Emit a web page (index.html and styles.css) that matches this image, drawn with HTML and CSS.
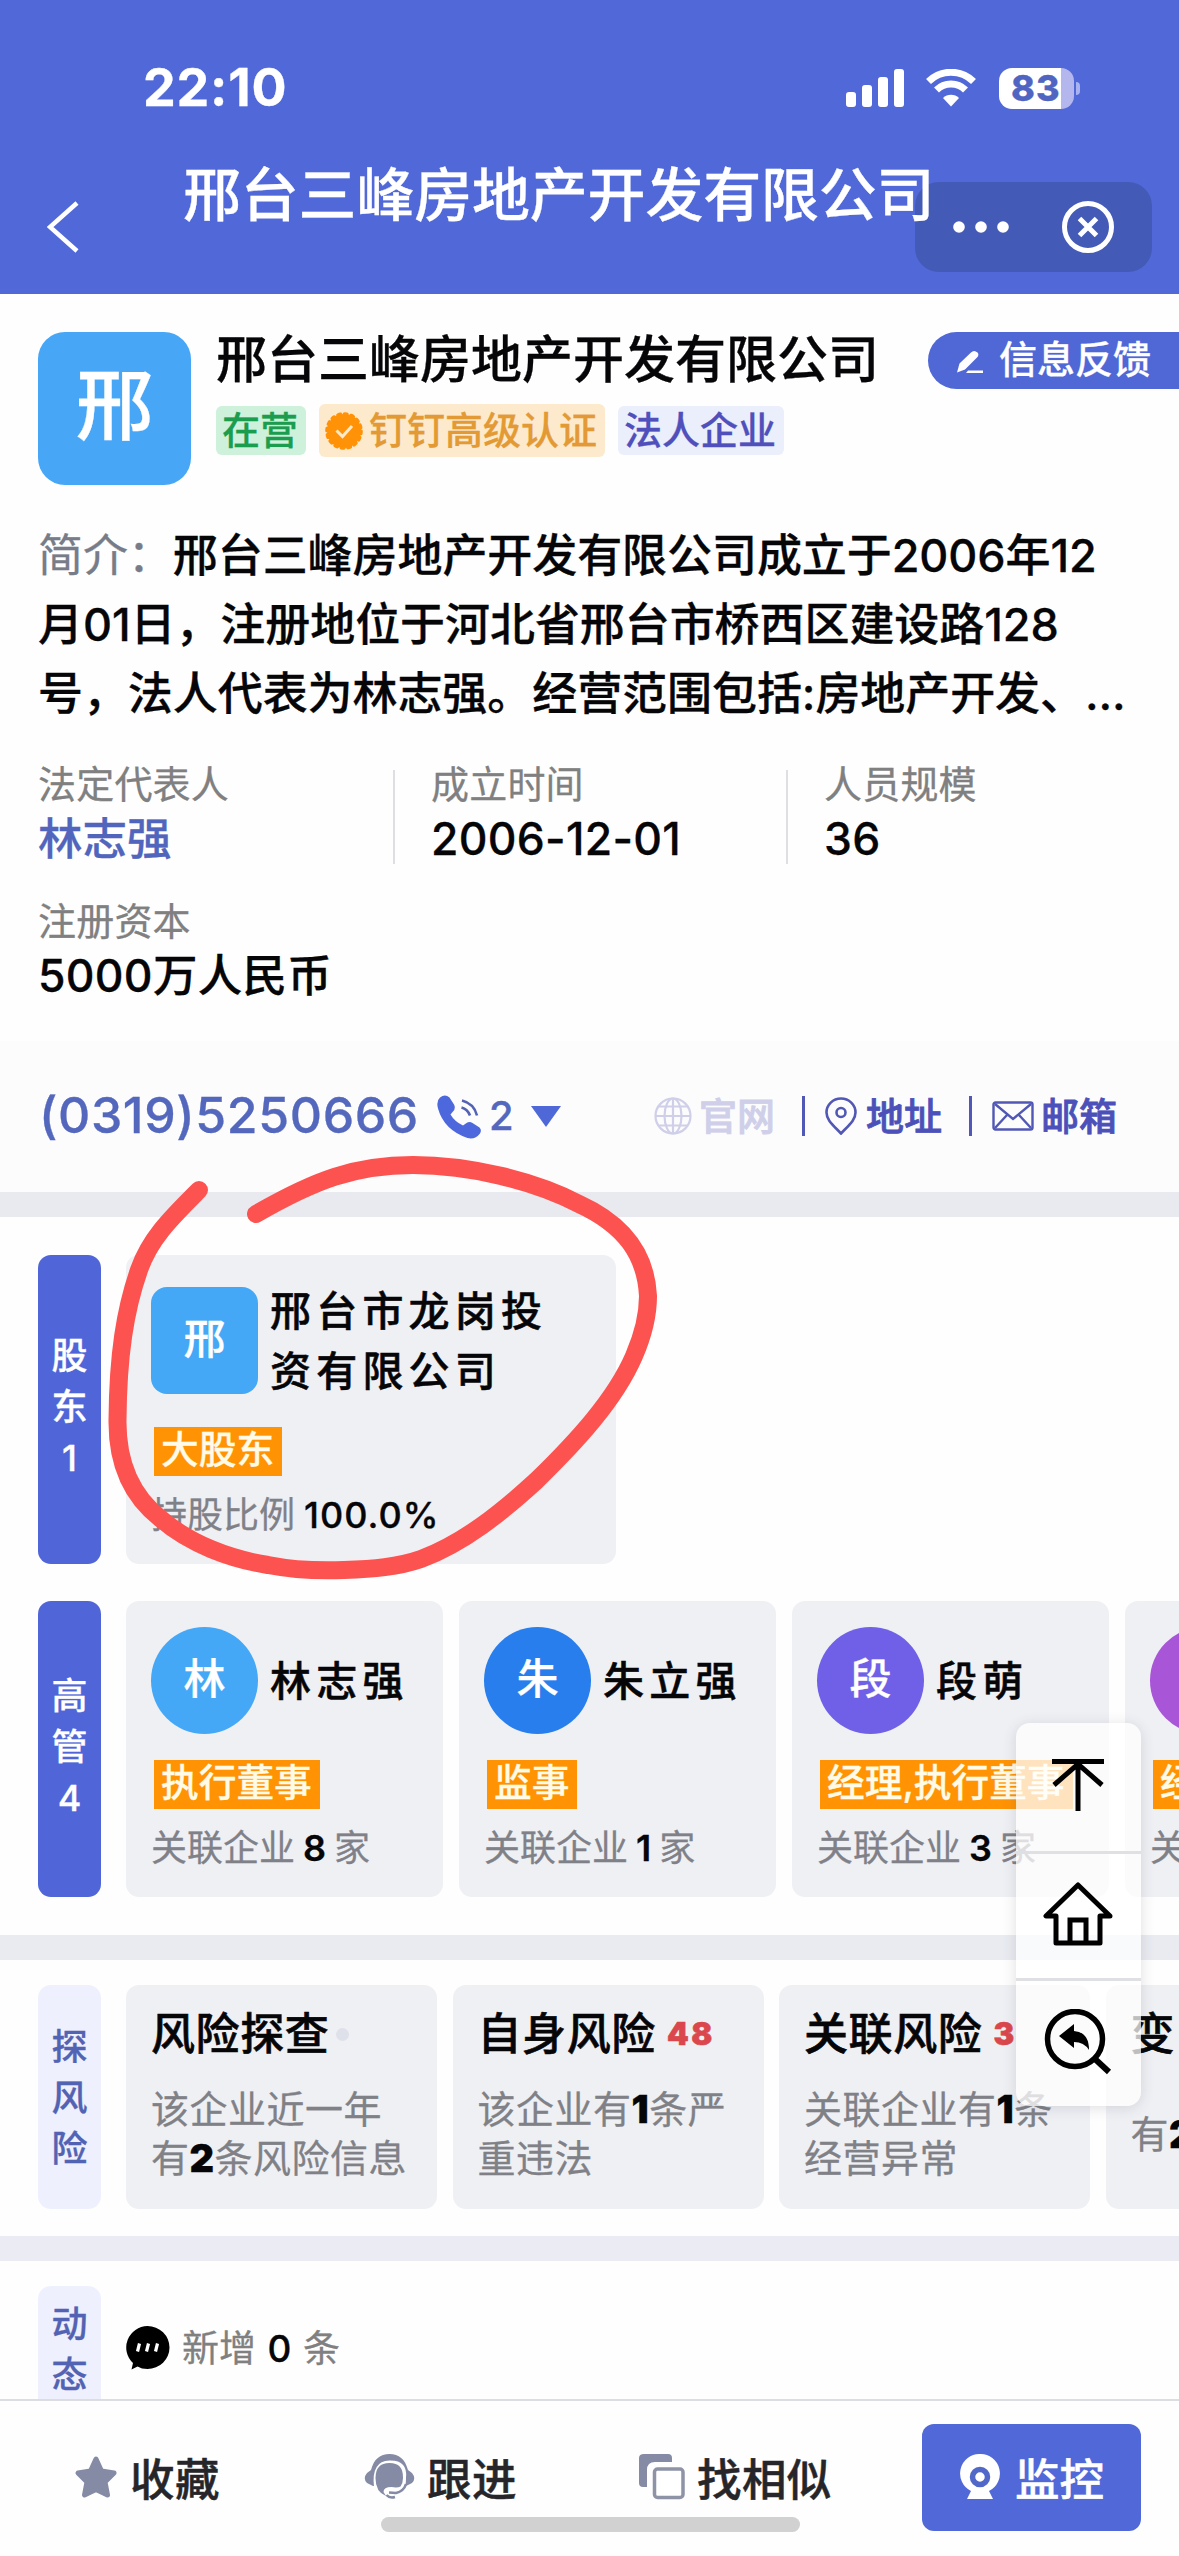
FILE: index.html
```html
<!DOCTYPE html>
<html lang="zh-CN">
<head>
<meta charset="utf-8">
<title>邢台三峰房地产开发有限公司</title>
<link rel="stylesheet" href="styles.css">
</head>
<body>
<div class="screen">
  <header class="header">
    <div class="status">
      <span class="time">22:10</span>
      <div class="status-icons">
        <svg class="signal" viewBox="0 0 58 38" fill="#fff"><rect x="0" y="23" width="10" height="15" rx="3"/><rect x="16" y="16" width="10" height="22" rx="3"/><rect x="32" y="8" width="10" height="30" rx="3"/><rect x="48" y="0" width="10" height="38" rx="3"/></svg>
        <svg class="wifi" viewBox="0 0 50 38" fill="none" stroke="#fff"><path d="M2.500 12.500a32 32 0 0 1 45 0" stroke-width="7"/><path d="M10.500 21a20.500 20.500 0 0 1 29 0" stroke-width="7"/><path d="M25 37.500l-8-8.500a11.500 11.500 0 0 1 16 0z" fill="#fff" stroke="none"/></svg>
        <div class="battery"><span class="battery-text">83</span></div>
      </div>
    </div>
    <div class="navbar">
      <svg class="back" viewBox="0 0 32 52" fill="none" stroke="#fff" stroke-width="4.500"><path d="M30 2L3 26l27 24"/></svg>
      <h1 class="page-title">邢台三峰房地产开发有限公司</h1>
      <div class="capsule">
        <svg class="dots" viewBox="0 0 56 12" fill="#fff"><circle cx="6" cy="6" r="5.800"/><circle cx="28" cy="6" r="5.800"/><circle cx="50" cy="6" r="5.800"/></svg>
        <svg class="close" viewBox="0 0 52 52" fill="none" stroke="#fff" stroke-width="5"><circle cx="26" cy="26" r="23.500"/><path d="M17.500 17.500l17 17M34.500 17.500l-17 17"/></svg>
      </div>
    </div>
  </header>

  <section class="company">
    <div class="company-head">
      <div class="logo">邢</div>
      <div class="company-main">
        <h2 class="company-name">邢台三峰房地产开发有限公司</h2>
        <div class="tags">
          <span class="tag tag-green">在营</span>
          <span class="tag tag-orange"><svg class="seal" viewBox="0 0 38 38"><circle cx="19" cy="19" r="17" fill="#ff9206"/><circle cx="19" cy="19" r="17" fill="none" stroke="#ff9206" stroke-width="3.600" stroke-linecap="round" stroke-dasharray="2.500 4.176"/><path d="M11.500 18.500l6 6 9.500-10.500" fill="none" stroke="#ffe9c8" stroke-width="3"/></svg>钉钉高级认证</span>
          <span class="tag tag-blue">法人企业</span>
        </div>
      </div>
      <div class="feedback">
        <svg class="pencil" viewBox="0 0 27 24" fill="#fff"><path d="M0 22.500l2.500-9L14 2.500q3-3 6.500 0 2 2.500-.5 5L8 19.500z"/><path d="M11 20.500h15v2.500H9z"/></svg>
        <span>信息反馈</span>
      </div>
    </div>
    <p class="intro"><span class="intro-label">简介：</span>邢台三峰房地产开发有限公司成立于2006年12<br>月01日，注册地位于河北省邢台市桥西区建设路128<br>号，法人代表为林志强。经营范围包括:房地产开发、...</p>
    <dl class="facts">
      <div class="fact"><dt>法定代表人</dt><dd class="link">林志强</dd></div>
      <div class="fact"><dt>成立时间</dt><dd>2006-12-01</dd></div>
      <div class="fact"><dt>人员规模</dt><dd>36</dd></div>
      <div class="fact"><dt>注册资本</dt><dd>5000万人民币</dd></div>
    </dl>
  </section>

  <section class="contact">
    <span class="phone">(0319)5250666</span>
    <svg class="call" viewBox="0 0 44 44"><path d="M3 2.500Q8-1.500 12.500 2.500L17 9.500q2 4-1 7l-2.500 3q4 7 12.500 11l3.500-2.500q3-2 6 0l7 4.500q2.500 2.500 .5 6-5 6.500-12.500 4.500Q7 35 1 13.500-1 6 3 2.500z" fill="#4d68dc"/><path d="M24.500 12.500q6 1.500 8.500 8M25 5.500q12 3 15 15" fill="none" stroke="#5262b4" stroke-width="2.600"/></svg>
    <span class="phone-count">2</span>
    <svg class="caret" viewBox="0 0 30 21"><path d="M0 0h30L15 21z" fill="#4f68d8"/></svg>
    <div class="links">
      <span class="contact-link muted"><svg class="globe" viewBox="0 0 38 38" fill="none" stroke="currentColor" stroke-width="2.200"><circle cx="19" cy="19" r="17.500"/><ellipse cx="19" cy="19" rx="8.500" ry="17.500"/><path d="M19 1.500v35M1.500 19h35M5 9.500h28M5 28.500h28"/></svg>官网</span>
      <i class="bar"></i>
      <span class="contact-link"><svg class="pin" viewBox="0 0 32 38" fill="none" stroke="#5157b4" stroke-width="2.600"><path d="M16 36.500C8 28 1.500 23 1.500 15.500a14.500 14 0 0 1 29 0C30.500 23 24 28 16 36.500z"/><circle cx="16" cy="15.500" r="4.500"/></svg>地址</span>
      <i class="bar"></i>
      <span class="contact-link"><svg class="mail" viewBox="0 0 42 30" fill="none" stroke="#5157b4" stroke-width="2.400"><rect x="1.500" y="1.500" width="39" height="27" rx="2"/><path d="M3 3l18 15L39 3M3 27l12-13M39 27L27 14"/></svg>邮箱</span>
    </div>
  </section>

  <section class="people">
    <div class="row holders">
      <div class="tab">股<br>东<br>1</div>
      <article class="card holder">
        <div class="who"><span class="avatar square">邢</span><span class="name">邢台市龙岗投<br>资有限公司</span></div>
        <span class="badge">大股东</span>
        <p class="meta">持股比例<b>100.0%</b></p>
      </article>
    </div>
    <div class="row execs">
      <div class="tab">高<br>管<br>4</div>
      <article class="card exec">
        <div class="who"><span class="avatar sky">林</span><span class="name">林志强</span></div>
        <span class="badge">执行董事</span>
        <p class="meta">关联企业<b>8</b>家</p>
      </article>
      <article class="card exec">
        <div class="who"><span class="avatar blue">朱</span><span class="name">朱立强</span></div>
        <span class="badge">监事</span>
        <p class="meta">关联企业<b>1</b>家</p>
      </article>
      <article class="card exec">
        <div class="who"><span class="avatar violet">段</span><span class="name">段萌</span></div>
        <span class="badge">经理,执行董事</span>
        <p class="meta">关联企业<b>3</b>家</p>
      </article>
      <article class="card exec">
        <div class="who"><span class="avatar purple"></span></div>
        <span class="badge">经</span>
        <p class="meta">关</p>
      </article>
    </div>
  </section>

  <section class="risks">
    <div class="row risk-row">
      <div class="tab pale">探<br>风<br>险</div>
      <article class="card risk"><h3>风险探查<i class="dot"></i></h3><p>该企业近一年<br>有<b>2</b>条风险信息</p></article>
      <article class="card risk"><h3>自身风险<em>48</em></h3><p>该企业有<b>1</b>条严<br>重违法</p></article>
      <article class="card risk"><h3>关联风险<em>3</em></h3><p>关联企业有<b>1</b>条<br>经营异常</p></article>
      <article class="card risk"><h3>变</h3><p class="single">有<b>2</b></p></article>
    </div>
  </section>

  <section class="news">
    <div class="tab pale">动<br>态</div>
    <svg class="chat" viewBox="0 0 45 44"><path d="M22.500 0a22 21.500 0 0 1 0 43q-6 0-10-2.500L6.500 43.500 8 37A22 21.500 0 0 1 22.500 0z"/><path d="M14.500 17.500l-2 8M23.500 17.500l-2 8M32.500 17.500l-2 8" stroke="#fff" stroke-width="3.200"/></svg>
    <span class="news-text">新增<b>0</b>条</span>
  </section>

  <nav class="toolbar">
    <a class="tool star-tool"><svg class="star" viewBox="0 0 46 44"><path d="M23 4l5.500 12L41 18l-9 9 2.500 13L23 34.500 11.500 40 14 27l-9-9 12.500-2z" fill="#858ba5" stroke="#858ba5" stroke-width="5" stroke-linejoin="round"/></svg>收藏</a>
    <a class="tool follow-tool"><svg class="headset" viewBox="0 0 51 45"><path d="M7 16C10 5 16 0 25.500 0S41 5 44 16l4 3q4.500 5.500 0 10l-6 3H9l-6-3q-4.500-4.500 0-10z" fill="#858ba5"/><path d="M10 33Q7 7 25.500 6.500T42 24q0 8-2 11l-15 9q-9 0-15-11z" fill="#fff"/><path d="M11.500 24Q11.500 9 25.500 9t13.500 15q0 5-2.500 8.500-3 1.500-9 .5-8 0-8 5l2.500 4Q11.500 38 11.500 24z" fill="#858ba5"/><path d="M42 30q-2 7-10 9l-7-.5M22.500 41q3 3.500 8.500 2" fill="none" stroke="#858ba5" stroke-width="2.600"/></svg>跟进</a>
    <a class="tool similar-tool"><svg class="copy" viewBox="0 0 47 46"><path d="M5 0h24q4 0 4 4v4H16q-8 0-8 8v17H4q-4 0-4-4V4q0-4 5-4z" fill="#858ba5"/><rect x="15.500" y="15" width="28.500" height="28.500" rx="3" fill="#fff" stroke="#8f93a6" stroke-width="3.500"/></svg>找相似</a>
    <a class="monitor"><svg class="camera" viewBox="0 0 40 46"><path d="M20 0a19.500 19.500 0 0 1 9 37l4 8H7l4-8A19.500 19.500 0 0 1 20 0z" fill="#fff"/><circle cx="20" cy="23" r="7.500" fill="none" stroke="#5168c8" stroke-width="5.500"/></svg>监控</a>
    <div class="home-indicator"></div>
  </nav>

  <aside class="float-menu">
    <div class="float-item"><svg class="to-top" viewBox="0 0 54 54" fill="none" stroke="#000" stroke-width="5"><path d="M1 3.500h52M27 3v50M3 27L27 6l24 21"/></svg></div>
    <div class="float-item"><svg class="home" viewBox="0 0 70 64" fill="none" stroke="#000" stroke-width="5" stroke-linejoin="round"><path d="M35 3L3 34h10v27h44V34h10z"/><path d="M27 60V38h16v22" stroke-linejoin="miter"/></svg></div>
    <div class="float-item"><svg class="search" viewBox="0 0 68 66"><circle cx="31" cy="30" r="27.500" fill="none" stroke="#000" stroke-width="5.500"/><path d="M51 50l14 13" stroke="#000" stroke-width="6"/><path d="M15 27l15-12v7q15 1 15 19-5-8-15-8v6z"/></svg></div>
  </aside>

  <svg class="annotation" viewBox="0 0 560 430" fill="none" stroke="#fc5350" stroke-width="18" stroke-linecap="round" stroke-linejoin="round"><path d="M99 40C72 67 50 88 39 120C25 160 18 205 17.500 270C17 310 30 345 61 369C90 394 130 409 168 415C194 420 220 421 244 420C273 419 298 417 321 409C364 393 402 362 436 331C476 292 515 250 534 206C544 183 548 165 548 146C546 105 525 75 479 54C435 31 370 15 313 15C255 15 215 30 156 64"/></svg>
</div>
</body>
</html>
```
FILE: styles.css
```css
* { box-sizing: border-box; margin: 0; padding: 0; }
body { width: 1179px; height: 2556px; overflow: hidden; background: #fefefe; font-family: Inter, "Noto Sans CJK SC", sans-serif; color: #060608; font-weight: 500; -webkit-text-stroke: .3px currentColor; }
svg { display: block; flex: none; }
i, em { font-style: normal; }
.screen { position: relative; width: 1179px; height: 2556px; display: flex; flex-direction: column; overflow: hidden; white-space: nowrap; }
.screen > * { flex: none; }

/* Header */
.header { height: 294px; background: #5169d8; color: #fff; padding-top: 60px; }
.status { height: 56px; display: flex; align-items: center; padding: 0 98px 0 143px; justify-content: space-between; }
.time { font-size: 52px; font-weight: 700; line-height: 56px; letter-spacing: .8px; }
.status-icons { display: flex; align-items: center; }
.signal { width: 58px; height: 38px; margin-right: 22px; }
.wifi { width: 50px; height: 38px; margin-right: 23px; }
.battery { position: relative; width: 75px; height: 41px; margin-right: 7px; border-radius: 13px; background: linear-gradient(90deg, #fff 62px, #b4b6ee 62px); display: flex; align-items: center; padding-left: 12px; }
.battery::after { content: ""; position: absolute; left: 77px; top: 14px; width: 4px; height: 13px; border-radius: 0 4px 4px 0; background: #a9b3ef; }
.battery-text { color: #5065c2; font-size: 36px; font-weight: 800; letter-spacing: 1px; }
.navbar { display: flex; height: 178px; padding: 42px 27px 0 47px; }
.back { width: 32px; height: 52px; margin-top: 43px; }
.page-title { position: relative; z-index: 1; width: 732px; margin: 2px 0 0 104px; font-size: 58px; font-weight: 500; line-height: 70px; letter-spacing: -0.2px; }
.capsule { width: 237px; height: 90px; margin-top: 24px; border-radius: 24px; background: #445ab7; display: flex; align-items: center; justify-content: space-between; padding: 0 38px 0 38px; }
.dots { width: 56px; height: 12px; }
.close { width: 52px; height: 52px; }

/* Company summary */
.company { height: 747px; padding-top: 38px; }
.company-head { display: flex; padding-left: 38px; }
.logo { width: 153px; height: 153px; border-radius: 27px; background: #47a7f6; color: #fff; font-size: 78px; line-height: 148px; text-align: center; }
.company-main { width: 737px; padding-left: 25px; }
.company-name { font-size: 51px; font-weight: 500; line-height: 56px; }
.tags { display: flex; gap: 13px; margin-top: 16px; align-items: center; }
.tag { height: 49px; line-height: 47px; font-size: 38px; border-radius: 6px; padding: 0 6px; display: flex; align-items: center; }
.tag-green { background: #cdf1db; color: #1a9d4e; width: 90px; }
.tag-orange { background: #fdeacc; color: #e39a34; height: 53px; width: 286px; }
.tag-blue { background: #ebeefb; color: #4f50bb; width: 166px; }
.seal { width: 38px; height: 38px; margin-right: 6px; }
.feedback { flex: 1; height: 57px; border-radius: 29px 0 0 29px; background: #5067d6; color: #fff; font-size: 38px; display: flex; align-items: center; padding: 0 0 4px 29px; }
.feedback span { margin-top: -4px; }
.pencil { width: 27px; height: 24px; margin: 6px 15px 0 0; }
.intro { margin: 36px 0 0 38px; font-size: 45px; line-height: 69px; letter-spacing: -0.07px; }
.intro-label { color: #777c88; font-weight: 400; }
.facts { display: grid; grid-template-columns: repeat(3, 393px); row-gap: 31px; margin-top: 30px; }
.fact { padding-left: 38px; height: 106px; position: relative; }
.fact:nth-child(2), .fact:nth-child(3) { background: linear-gradient(#dfdfe3, #dfdfe3) -1px 12px / 3px 94px no-repeat; }
.fact dt { font-size: 38px; font-weight: 400; line-height: 52px; color: #808080; letter-spacing: .2px; }
.fact dd { font-size: 44.500px; line-height: 58px; letter-spacing: .3px; }
.fact .link { color: #5265bd; letter-spacing: 0; }

/* Contact strip */
.contact { height: 151px; background: #fcfcfd; display: flex; align-items: center; padding: 0 62px 1px 39px; }
.phone { font-size: 50px; color: #5367bd; width: 398px; letter-spacing: .6px; margin-top: -3px; }
.call { width: 44px; height: 44px; margin-top: 1px; }
.phone-count { font-size: 40px; color: #5367bd; margin: -2px 0 0 8px; width: 42px; }
.caret { width: 30px; height: 21px; }
.links { display: flex; align-items: center; margin-left: auto; font-size: 38px; font-weight: 500; color: #4c50b9; -webkit-text-stroke-width: .8px; }
.contact-link { display: flex; align-items: center; line-height: 50px; }
.muted { color: #cfcfe9; }
.globe { width: 38px; height: 38px; margin-right: 7px; }
.pin { width: 32px; height: 38px; margin-right: 9px; }
.mail { width: 42px; height: 30px; margin-right: 7px; }
.bar { width: 3px; height: 40px; background: #5157b4; margin: 0 20px 0 27px; }

/* Shareholders and executives */
.people { border-top: 25px solid #e8eaf0; height: 768px; padding: 38px 0 0 38px; border-bottom: 25px solid #e9ebf1; }
.row { display: flex; overflow: hidden; }
.tab { flex: none; width: 63px; border-radius: 13px; background: #5066d8; color: #fff; font-size: 36px; line-height: 51px; text-align: center; display: flex; align-items: center; justify-content: center; margin-right: 25px; }
.people .tab { padding-bottom: 4px; }
.pale { background: #eef0fe; color: #5363b3; padding-top: 3px; }
.card { flex: none; border-radius: 13px; background: #eff0f4; padding-left: 25px; }
.holders { height: 309px; margin-bottom: 37px; }
.holder { width: 490px; padding-top: 32px; }
.execs { height: 296px; }
.exec { width: 317px; padding-top: 26px; margin-right: 16px; }
.who { display: flex; align-items: center; height: 107px; }
.avatar { width: 107px; height: 107px; border-radius: 50%; color: #fff; font-size: 42px; line-height: 103px; text-align: center; margin-right: 12px; }
.square { border-radius: 16px; }
.square, .sky { background: #45a8f6; }
.blue { background: #277eec; }
.violet { background: #7060e8; }
.purple { background: #a855d8; }
.name { font-size: 41px; letter-spacing: 5.200px; line-height: 60px; -webkit-text-stroke-width: .5px; }
.badge { display: inline-block; background: #ff9304; color: #fffbe6; font-size: 37.700px; line-height: 45px; height: 49px; padding: 0 8px 0 7px; margin: 33px 0 0 3px; vertical-align: top; }
.exec .badge { margin-top: 26px; }
.meta { font-size: 36px; font-weight: 400; color: #808188; line-height: 50px; margin-top: 14px; }
.meta b { color: #060608; font-weight: 500; margin: 0 9px; letter-spacing: 1px; }
.exec .meta b { font-weight: 600; margin: 0 8px; letter-spacing: 0; }

/* Risk */
.risks { height: 301px; padding: 25px 0 0 38px; border-bottom: 25px solid #eaebf3; }
.risk-row { height: 224px; }
.risk { width: 311px; margin-right: 15.500px; padding-top: 21px; }
.risk h3 { font-size: 44px; font-weight: 500; line-height: 56px; letter-spacing: .6px; display: flex; align-items: center; -webkit-text-stroke-width: .6px; }
.risk em { font-size: 31px; font-weight: 900; color: #da474c; letter-spacing: 2.500px; margin-left: 11px; }
.dot { width: 13px; height: 13px; border-radius: 50%; background: #dfe1ea; margin-left: 7px; }
.risk p { font-size: 38px; font-weight: 400; line-height: 49px; letter-spacing: .5px; color: #808186; margin-top: 23px; }
.risk .single { margin-top: 48px; }
.risk b { color: #060608; font-weight: 900; }

/* News */
.news { height: 138px; padding: 25px 0 0 38px; display: flex; overflow: hidden; }
.news .tab { height: 200px; align-items: flex-start; padding-top: 13px; margin-right: 24px; }
.chat { width: 45px; height: 44px; margin: 40px 12px 0 0; }
.news-text { font-size: 37px; font-weight: 400; color: #808080; line-height: 50px; margin-top: 38px; }
.news-text b { color: #060608; font-weight: 500; margin: 0 11.500px; }

/* Bottom toolbar */
.toolbar { position: relative; height: 157px; border-top: 2px solid #dcdde0; background: #fefefe; display: flex; color: #26262a; font-size: 44.500px; -webkit-text-stroke-width: .5px; }
.tool { display: flex; align-items: center; height: 151px; letter-spacing: .4px; }
.star-tool { margin-left: 73px; width: 291px; }
.follow-tool { width: 275px; }
.similar-tool { width: 283px; }
.star { width: 46px; height: 44px; margin-right: 11px; }
.headset { width: 51px; height: 45px; margin-right: 12px; }
.copy { width: 47px; height: 46px; margin-right: 11px; }
.monitor { width: 219px; height: 107px; margin-top: 23px; border-radius: 12px; background: #5168d8; color: #fff; display: flex; align-items: center; padding: 0 0 2px 38px; }
.camera { width: 40px; height: 46px; margin-right: 15px; }
.home-indicator { position: absolute; left: 381px; top: 116px; width: 419px; height: 15px; border-radius: 8px; background: #d1d1d1; }

/* Floating shortcuts */
.float-menu { position: absolute; left: 1016px; top: 1723px; width: 125px; height: 383px; border-radius: 14px; background: rgba(255,255,255,.74); box-shadow: 0 2px 14px rgba(60,60,80,.16); }
.float-item { height: 127.500px; display: flex; align-items: center; justify-content: center; padding: 0 2px 4px 0; }
.float-item:last-child { padding-bottom: 2px; }
.float-item + .float-item { border-top: 3px solid #dfe0e3; }
.to-top { width: 54px; height: 54px; }
.home { width: 70px; height: 64px; }
.search { width: 68px; height: 66px; }

/* Freehand mark over the shareholder card */
.annotation { position: absolute; left: 100px; top: 1150px; width: 560px; height: 430px; }
```
